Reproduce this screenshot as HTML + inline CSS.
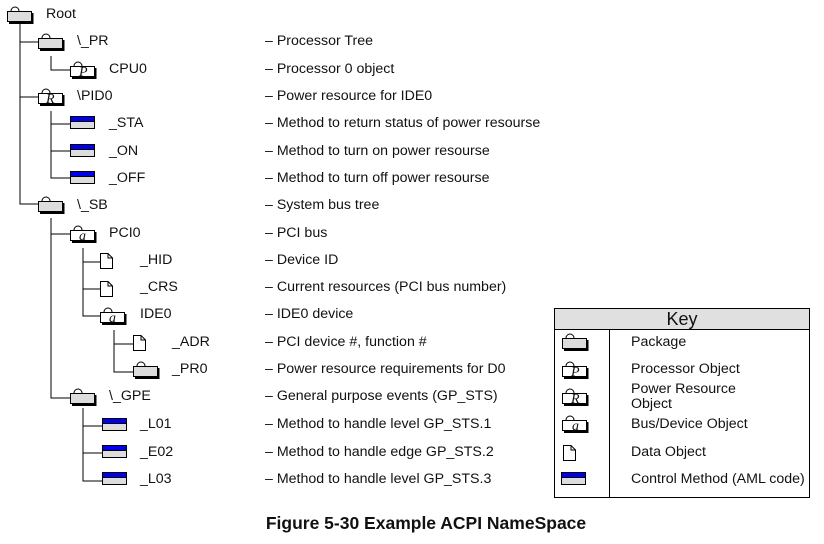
<!DOCTYPE html><html><head><style>
body{margin:0;background:#fff;width:824px;height:539px;overflow:hidden}
text{font-family:"Liberation Sans",Arial,sans-serif;font-size:14.2px;fill:#111}
.i{font-family:"Liberation Serif",serif;font-style:italic;font-size:14px}
</style></head><body>
<svg width="824" height="539" xmlns="http://www.w3.org/2000/svg">
<defs>
<g id="pkg"><path d="M4 4 A4 4 0 0 1 12 4" fill="none" stroke="#000"/><rect x="0.5" y="4.5" width="24" height="10" fill="#ddd" stroke="#000"/><path d="M25.5 6 V16 H2" stroke="#000" stroke-width="2" fill="none"/></g>
<g id="pkw"><path d="M4 4 A4 4 0 0 1 12 4" fill="none" stroke="#000"/><rect x="0.5" y="4.5" width="24" height="10" fill="#fff" stroke="#000"/><path d="M25.5 6 V16 H2" stroke="#000" stroke-width="2" fill="none"/></g>
<g id="meth"><rect x="0.5" y="0.5" width="24" height="12" fill="#ddd" stroke="#000"/><rect x="1" y="1" width="23" height="4" fill="#0000ee"/><line x1="0" y1="5.5" x2="25" y2="5.5" stroke="#000"/></g>
<g id="data"><path d="M0.5 0.5 H8 L12.5 5 V15.5 H0.5 Z" fill="#fff" stroke="#000"/><path d="M8 0.5 V5 H12.5" fill="none" stroke="#000"/></g>
</defs>
<g stroke="#000" fill="none">
<path d="M20 22 V204 H38 M20 42 H38 M20 97 H38"/>
<path d="M51 56 V70 H70"/>
<path d="M51 111 V178 H70 M51 124 H70 M51 151 H70"/>
<path d="M51 218 V398 H70 M51 234 H70"/>
<path d="M83 248 V316 H100 M83 262 H100 M83 289 H100"/>
<path d="M114 330 V372 H133 M114 344 H133"/>
<path d="M83 408 V481 H102 M83 426 H102 M83 453 H102"/>
</g>
<use href="#pkg" x="7" y="7"/>
<use href="#pkg" x="38" y="34"/>
<use href="#pkw" x="70" y="62"/><text x="79" y="76" class="i">P</text>
<use href="#pkw" x="38" y="89"/><text x="46" y="103" class="i">R</text>
<use href="#meth" x="70" y="116"/><use href="#meth" x="70" y="144"/><use href="#meth" x="70" y="171"/>
<use href="#pkg" x="38" y="197"/>
<use href="#pkw" x="70" y="226"/><text x="79" y="240" class="i">a</text>
<use href="#data" x="100" y="253"/><use href="#data" x="100" y="281"/>
<use href="#pkw" x="100" y="308"/><text x="109" y="322" class="i">a</text>
<use href="#data" x="133" y="335"/>
<use href="#pkg" x="133" y="362"/>
<use href="#pkg" x="70" y="389"/>
<use href="#meth" x="102" y="418"/><use href="#meth" x="102" y="445"/><use href="#meth" x="102" y="472"/>
<text x="46" y="18">Root</text>
<text x="77" y="45">\_PR</text>
<text x="109" y="73">CPU0</text>
<text x="77" y="100">\PID0</text>
<text x="109" y="127">_STA</text>
<text x="109" y="155">_ON</text>
<text x="109" y="182">_OFF</text>
<text x="77" y="209">\_SB</text>
<text x="109" y="237">PCI0</text>
<text x="140" y="264">_HID</text>
<text x="140" y="291">_CRS</text>
<text x="140" y="318">IDE0</text>
<text x="172" y="346">_ADR</text>
<text x="172" y="373">_PR0</text>
<text x="109" y="400">\_GPE</text>
<text x="140" y="428">_L01</text>
<text x="140" y="456">_E02</text>
<text x="140" y="483">_L03</text>
<g>
<text x="265" y="45">– Processor Tree</text>
<text x="265" y="73">– Processor 0 object</text>
<text x="265" y="100">– Power resource for IDE0</text>
<text x="265" y="127">– Method to return status of power resourse</text>
<text x="265" y="155">– Method to turn on power resourse</text>
<text x="265" y="182">– Method to turn off power resourse</text>
<text x="265" y="209">– System bus tree</text>
<text x="265" y="237">– PCI bus</text>
<text x="265" y="264">– Device ID</text>
<text x="265" y="291">– Current resources (PCI bus number)</text>
<text x="265" y="318">– IDE0 device</text>
<text x="265" y="346">– PCI device #, function #</text>
<text x="265" y="373">– Power resource requirements for D0</text>
<text x="265" y="400">– General purpose events (GP_STS)</text>
<text x="265" y="428">– Method to handle level GP_STS.1</text>
<text x="265" y="456">– Method to handle edge GP_STS.2</text>
<text x="265" y="483">– Method to handle level GP_STS.3</text>
</g>
<rect x="554.5" y="308.5" width="255" height="189" fill="#fff" stroke="#000"/>
<rect x="555" y="309" width="254" height="20" fill="#e0e0e0"/>
<line x1="554" y1="329.5" x2="810" y2="329.5" stroke="#000"/>
<line x1="609.5" y1="330" x2="609.5" y2="498" stroke="#000"/>
<text x="682" y="325" text-anchor="middle" style="font-size:18px">Key</text>
<use href="#pkg" x="562" y="334"/>
<use href="#pkw" x="562" y="362"/><text x="571" y="376" class="i">P</text>
<use href="#pkw" x="562" y="389"/><text x="571" y="403" class="i">R</text>
<use href="#pkw" x="562" y="416"/><text x="572" y="430" class="i">a</text>
<use href="#data" x="563" y="445"/>
<use href="#meth" x="561" y="472"/>
<text x="631" y="346">Package</text>
<text x="631" y="373">Processor Object</text>
<text x="631" y="393">Power Resource</text>
<text x="631" y="408">Object</text>
<text x="631" y="428">Bus/Device Object</text>
<text x="631" y="456">Data Object</text>
<text x="631" y="483">Control Method (AML code)</text>
<text x="426" y="529" text-anchor="middle" style="font-size:17.5px;font-weight:bold">Figure 5-30 Example ACPI NameSpace</text>
</svg>
</body></html>
